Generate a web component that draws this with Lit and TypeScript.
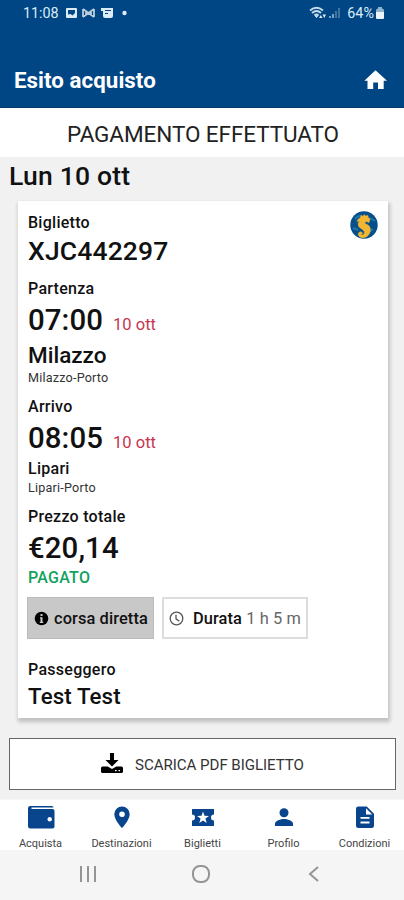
import { LitElement, html, css, svg } from "lit";
import { customElement } from "lit/decorators.js";

const NAV = [
  { label: "Acquista", icon: svg`<path d="M4.200 2H26a1.500 1.500 0 0 1 1.500 1.500H5.500v1.500H26.500a2 2 0 0 1 2 2V22.500a2 2 0 0 1-2 2H4.500a2.500 2.500 0 0 1-2.500-2.500V4.200A2.200 2.200 0 0 1 4.200 2z"/><circle cx="23.700" cy="15.200" r="2.200" fill="#fff"/>` },
  { label: "Destinazioni", icon: svg`<path fill-rule="evenodd" d="M15 2.500a7.700 7.700 0 0 0-7.700 7.700C7.300 16 15 24 15 24s7.700-8 7.700-13.800A7.700 7.700 0 0 0 15 2.500zm0 4.900a2.800 2.800 0 1 1 0 5.600 2.800 2.800 0 0 1 0-5.600z"/>` },
  { label: "Biglietti", icon: svg`<path d="M4 5h22v5.500a3 3 0 0 0 0 6V22H4v-5.500a3 3 0 0 0 0-6z"/><path fill="#fff" d="M15 7.500l1.500 4.300 4.500.1-3.600 2.700 1.300 4.400-3.700-2.600-3.700 2.600 1.300-4.400L9 11.900l4.500-.1z"/>` },
  { label: "Profilo", icon: svg`<circle cx="15" cy="8.800" r="4.500"/><path d="M6 22v-2.200c0-3.100 6-4.700 9-4.700s9 1.600 9 4.700V22z"/>` },
  { label: "Condizioni", icon: svg`<path fill-rule="evenodd" d="M8.300 2.500h8.500L24 9.700v12a2.300 2.300 0 0 1-2.300 2.300H8.300A2.300 2.300 0 0 1 6 21.700v-17a2.300 2.300 0 0 1 2.300-2.200zM16 4.200v6.300h6.300zM10.500 13v1.800h9V13zm0 4.600v1.800h9v-1.800z"/>` },
];

@customElement("app-root")
export class AppRoot extends LitElement {
  static styles = css`
    :host { display: flex; flex-direction: column; height: 900px; width: 404px; overflow: hidden; background: #f1f1f1; color: #111; font-family: Roboto, sans-serif; }
    * { box-sizing: border-box; }
    svg { display: block; flex: none; }
    header { height: 108px; flex: none; background: #004685; color: #fff; border-bottom: 1px solid #083868; }
    .status { display: flex; align-items: center; height: 26px; padding: 0 19px 0 23px; font-size: 14.300px; color: #dcebf5; }
    .status .left { margin-left: 6px; margin-right: auto; }
    .pct { margin-left: 5px; letter-spacing: .1px; }
    .battery { margin-left: 1px; }
    .signal { margin-right: -1px; }
    .bar { display: flex; align-items: center; justify-content: space-between; height: 54px; margin-top: 27px; padding: 0 17px 0 14px; }
    .bar h1 { margin: 0; font-size: 22.300px; font-weight: 700; letter-spacing: .05px; }
    .outcome { height: 49px; flex: none; display: flex; align-items: center; justify-content: center; background: #fff; font-size: 22.500px; letter-spacing: -.08px; padding-left: 2px; padding-top: 3px; white-space: nowrap; color: #222; }
    .day { height: 44px; flex: none; padding-left: 9px; font-size: 26.500px; letter-spacing: .2px; font-weight: 500; line-height: 38px; }
    .card { height: 517px; flex: none; margin: 0 16px 0 18px; padding: 12px 10px 0; background: #fff; box-shadow: 1px 3px 4px 1px #00000034; }
    .line { white-space: nowrap; font-weight: 500; }
    .label { font-size: 16px; line-height: 20px; letter-spacing: .27px; }
    .code { font-size: 26.500px; line-height: 30px; margin-top: 3px; letter-spacing: .15px; }
    .time { font-size: 29.400px; line-height: 34px; margin-top: 4px; letter-spacing: .1px; }
    .time span { font-size: 16.500px; line-height: 1; font-weight: 400; letter-spacing: 0; color: #c73550; margin-left: 10px; }
    .city { font-size: 22.500px; line-height: 26px; margin-top: 5px; }
    .port { font-size: 12.600px; line-height: 16px; font-weight: 400; letter-spacing: .2px; color: #333; margin-top: 2px; }
    .first { display: flex; justify-content: space-between; height: 20px; }
    .logo { margin: -2px 0 0 0; }
    .gap13 { margin-top: 13px; } .gap11 { margin-top: 11px; } .gap4 { margin-top: 4px; } .gap12 { margin-top: 11px; } .gap21 { margin-top: 21px; }
    .port.tight { margin-top: 1px; }
    .paid { color: #12a25e; margin-top: 3px; }
    .name { margin-top: 3px; font-size: 22.300px; letter-spacing: .1px; }
    .chips { display: flex; gap: 8px; margin: 9px 0 0 -1px; }
    .chip { height: 42px; display: flex; align-items: center; font-size: 16.400px; font-weight: 500; letter-spacing: .1px; white-space: nowrap; padding-top: 1px; }
    .direct { width: 127px; background: #c8c8c8; border: 1px solid #bbb; padding-left: 6px; gap: 5px; }
    .length { width: 146px; border: 2px solid #ddd; padding-left: 5px; gap: 9px; }
    .length span { font-weight: 400; color: #666; }
    .pdf { height: 52px; flex: none; margin: 20px 8px 0 9px; border: 1px solid #666; background: #fff; display: flex; align-items: center; justify-content: center; gap: 12px; font-size: 15.100px; letter-spacing: -.06px; padding-top: 1px; color: #333; white-space: nowrap; }
    .pdf svg { margin-top: -3px; }
    nav { height: 51px; flex: none; margin-top: 9px; background: #fff; display: grid; grid-template-columns: repeat(5, 81px); border-top: 1px solid #f7f7f7; }
    .tab { display: flex; flex-direction: column; align-items: center; padding-top: 4px; font-size: 11px; line-height: 14px; color: #444; white-space: nowrap; }
    .tab svg { fill: #08458c; margin-bottom: 7px; }
    .system { flex: 1; background: #f5f5f5; display: flex; justify-content: center; align-items: center; gap: 94px; padding: 0 3px 2px 0; }
    .system svg { fill: none; stroke: #949494; stroke-width: 2; }
  `;

  render() {
    return html`
      <header>
        <div class="status"><span>11:08</span>
          <svg class="left" width="66" height="14" viewBox="0 0 66 14" fill="#dcebf5">
            <path fill-rule="evenodd" d="M2 2h9q1 0 1 1v8q0 1-1 1H2q-1 0-1-1V3q0-1 1-1zm1 2v4.500l2.500-.5 2 1.500L10 7V4z"/>
            <path fill="none" stroke="#b8cede" stroke-width="1.800" d="M18 3v8M29 3v8M18 3l5.500 4L29 3M18 11l5.500-4 5.500 4M21 4.500v5m5-5v5"/>
            <path fill-rule="evenodd" d="M36 2h12v8q0 2-2 2h-6q-2 0-2-2V5h-2zm4 2v1h6V4zm0 3v1h3V7z"/>
            <circle cx="59.500" cy="7" r="2.200"/>
          </svg>
          <svg class="signal" width="34" height="14" viewBox="0 0 34 14" fill="none" stroke="#c5dbe8">
            <path stroke-width="1.900" d="M1 4.500q6.500-5.500 13 0M3 7q4.500-4 9 0M5.500 9.500q2-2 4 0"/><path stroke="none" fill="#dcebf5" d="M5.500 9.500h4l-2 2.500zM10 12l1.800-3 1.800 3zM13.500 8.500H17L15.300 12z"/>
            <path stroke="#8fb4ce" stroke-width="1.700" d="M21 12v-2M24 12V8"/><path stroke="#4c7da6" stroke-width="1.700" d="M27 12V5M30 12V2"/>
          </svg>
          <span class="pct">64%</span>
          <svg class="battery" width="10" height="14" viewBox="0 0 10 14"><path fill="#8fb4ce" d="M3 1h4v1.500q2 0 2 2V7H1V4.500q0-2 2-2z"/><path fill="#eaf4fa" d="M1 6h8v6q0 1-1 1H2q-1 0-1-1z"/></svg>
        </div>
        <div class="bar"><h1>Esito acquisto</h1>
          <svg width="23" height="20" viewBox="0 0 23 20" fill="#fff"><path d="M11.500.3L23 10.700h-3.300V19H14v-6.500H9.200V19H3.500v-8.300H.3z"/></svg>
        </div>
      </header>
      <div class="outcome">PAGAMENTO EFFETTUATO</div>
      <div class="day">Lun 10 ott</div>
      <section class="card">
        <div class="first"><div class="line label">Biglietto</div>
          <svg class="logo" width="28" height="28" viewBox="0 0 28 28"><circle cx="14" cy="14" r="13.700" fill="#064f8b"/><path d="M5 8q4-4 7-3M3 17l5 2M20 7l5 3M19 21l4-3" stroke="#1f78ac" stroke-width="2" fill="none"/>
            <path fill="#f3b632" stroke="#f3b632" stroke-width=".6" d="M8 8.500l2.500-2L11 4.500l2 .8 1.200-1.600 1.600 1.400 2-.6.5 2 1.700 1.500-1 3.500-2.500-1-1.700.7q-.4 1.300 1.700 2.100 4.500 1.800 3.700 6.700-1.200 6-7 6.700-4.400.2-5-3.400.3-2.700 2.800-2.500 1.800.4 1.300 2-1 .8-1.700 0 .2 1.600 2 1.200 2.600-1 1.700-3.400-.6-1.800-3.300-3.200-3.300-1.700-2.800-5l1.200-2.400-2.600.3z"/></svg>
        </div>
        <div class="line code">XJC442297</div>
        <div class="line label gap13">Partenza</div>
        <div class="line time">07:00<span>10 ott</span></div>
        <div class="line city">Milazzo</div>
        <div class="line port">Milazzo-Porto</div>
        <div class="line label gap11">Arrivo</div>
        <div class="line time">08:05<span>10 ott</span></div>
        <div class="line label gap4">Lipari</div>
        <div class="line port tight">Lipari-Porto</div>
        <div class="line label gap12">Prezzo totale</div>
        <div class="line time">€20,14</div>
        <div class="line label paid">PAGATO</div>
        <div class="chips">
          <div class="chip direct"><svg width="15" height="15" viewBox="0 0 15 15"><circle cx="7.500" cy="7.500" r="6.800"/><path fill="#c8c8c8" d="M6.500 3h2v2h-2zM6 6.300h2.500v4.500h.8V12H5.800v-1.200h.7V7.500H6z"/></svg>corsa diretta</div>
          <div class="chip length"><svg width="15" height="15" viewBox="0 0 15 15" fill="none" stroke="#555" stroke-width="1.300"><circle cx="7.500" cy="7.500" r="6.300"/><path d="M7 3.800v4l3.300 2.400"/></svg><div>Durata <span>1 h 5 m</span></div></div>
        </div>
        <div class="line label gap21">Passeggero</div>
        <div class="line city name">Test Test</div>
      </section>
      <div class="pdf"><svg width="22" height="21" viewBox="0 0 22 21"><path d="M9 0h4v7h4.500L11 13.500 4.500 7H9z"/><path fill-rule="evenodd" d="M1.500 13.500h5.200L11 16l4.300-2.500h5.200q1.500 0 1.500 1.500v3.500q0 1.500-1.500 1.500h-19Q0 20 0 18.500V15q0-1.500 1.500-1.500zM14 17v1.300h1.600V17zm3.500 0v1.300H19V17z"/></svg><span>SCARICA PDF BIGLIETTO</span></div>
      <nav>${NAV.map((n) => html`<div class="tab"><svg width="30" height="26" viewBox="0 0 30 26">${n.icon}</svg>${n.label}</div>`)}</nav>
      <div class="system">
        <svg width="18" height="18" viewBox="0 0 18 18"><path d="M2 1v16M9 1v16M16 1v16"/></svg>
        <svg width="20" height="20" viewBox="0 0 20 20"><rect x="2" y="2" width="16" height="16" rx="7"/></svg>
        <svg width="18" height="18" viewBox="0 0 18 18"><path d="M13 2L5 9l8 7"/></svg>
      </div>`;
  }
}
